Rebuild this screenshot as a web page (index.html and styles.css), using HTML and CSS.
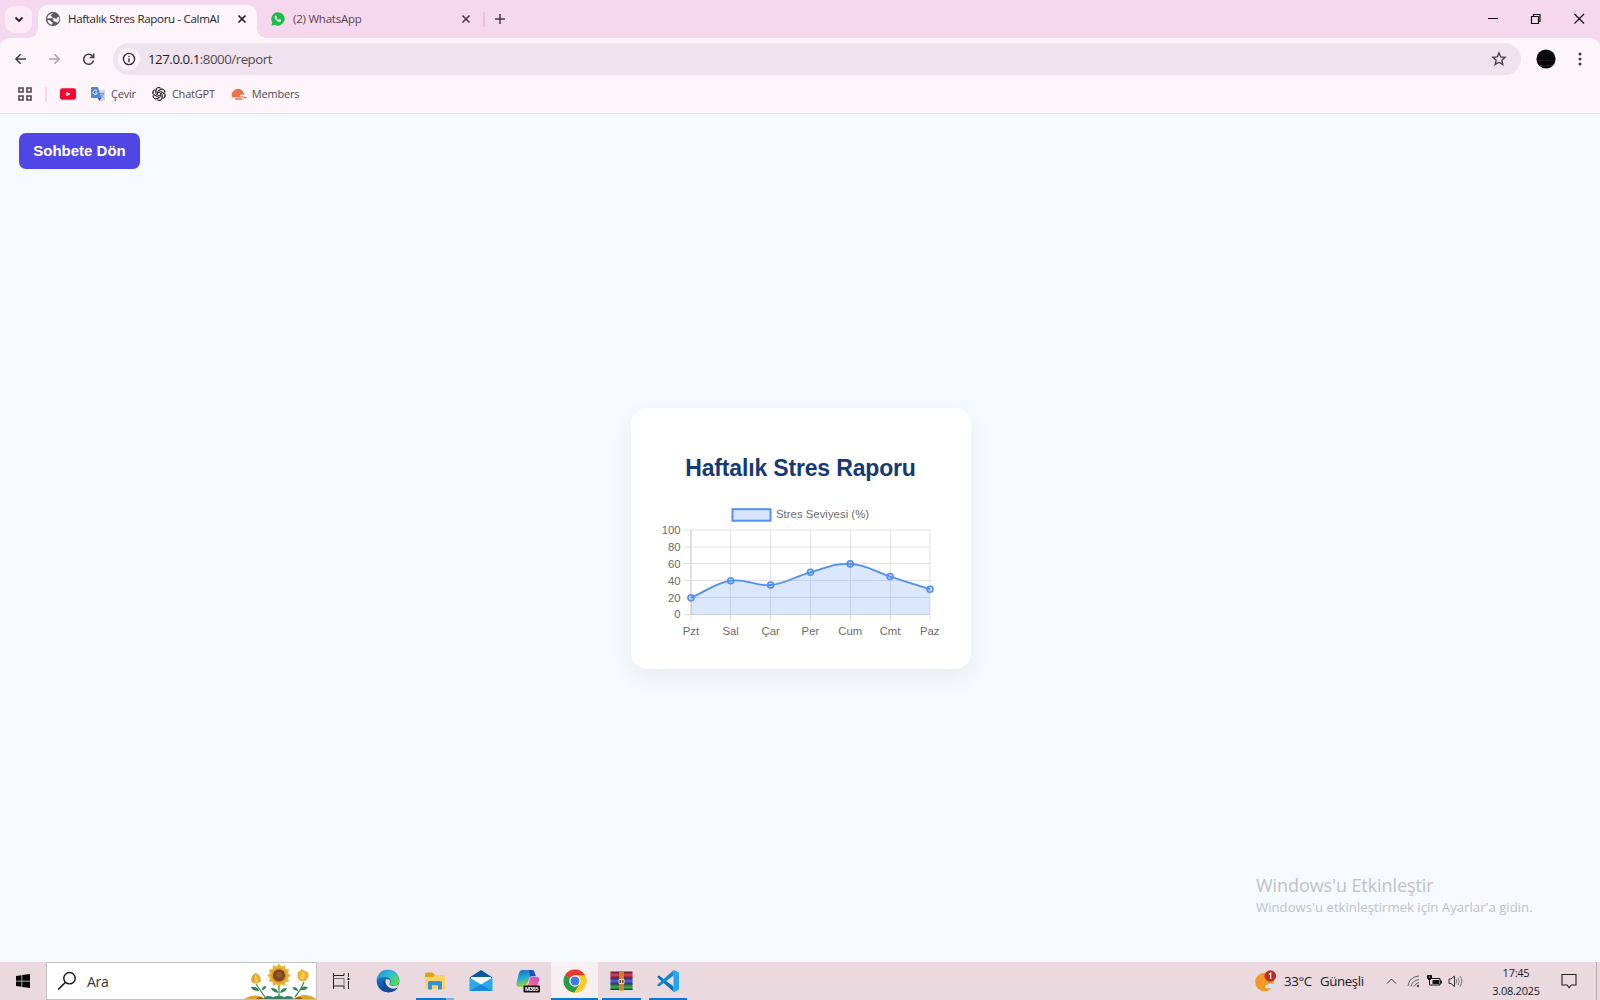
FILE: index.html
```html
<!DOCTYPE html>
<html lang="tr">
<head>
<meta charset="utf-8">
<title>Haftalık Stres Raporu - CalmAI</title>
<link rel="stylesheet" href="styles.css">
</head>
<body>
<header class="browser">
  <div class="tabs">
    <div class="tab-search"><svg width="28" height="28" viewBox="0 0 28 28"><path d="M10.500 11.500 14 15l3.500-3.500" fill="none" stroke="#241a22" stroke-width="1.800"/></svg></div>
    <div class="tab active">
      <svg class="favicon" width="16" height="16" viewBox="0 0 16 16"><circle cx="8" cy="8" r="7.200" fill="#5d5b60"/><path d="M8.300 2.200C7.600 3.200 6 3.300 5.700 4.300c-.3 1 1.400 1 1.700 1.900.2.700 1 .9 1.900.8.900-.1 1.100.9 2 .8 1-.1.800-1.300 1.500-1.800.5-.3 1-.1 1.400.4.300 2-.2 3.700-1.500 5-.8.500-1.300-.2-2-.7-.9-.6-2.300.2-2.400-.9 0-.9.400-1.500-.4-2.200C6.500 6.700 4.200 7.600 2.200 7.400 2.400 4.700 5 2.200 8.300 2.200zM2.400 9c1.300-.2 2.700.3 3.400 1.200.5.700 1.700.6 1.700 1.500 0 .7-.4 1.400-.2 2.100C4.500 13.600 2.600 11.600 2.400 9z" fill="#fdf5fa"/></svg>
      <span class="t tab-title">Haftalık Stres Raporu - CalmAI</span>
      <svg class="close" width="12" height="12" viewBox="0 0 12 12"><path d="m2.500 2.500 7 7m0-7-7 7" stroke="#1d1b20" stroke-width="1.600"/></svg>
    </div>
    <div class="tab idle">
      <svg class="favicon" width="16" height="16" viewBox="0 0 16 16"><path d="M8 1.200a6.700 6.700 0 1 1-3.200 12.600L1.300 14.800l1-3.400A6.700 6.700 0 0 1 8 1.200z" fill="#16c048"/><path d="M5.600 4.600c.5-.3.800 0 1 .5.300.7.400.9 0 1.400-.3.400-.2.500.2 1 .5.700 1 1.100 1.700 1.400.3.200.5.100.8-.3.300-.4.500-.4.900-.2.900.4 1.200.5 1.100.9-.1 1-.9 1.500-1.700 1.500-2.500-.2-4.900-2.500-5-4.600 0-.7.500-1.300 1-1.600z" fill="#fff"/></svg>
      <span class="t tab-title idle-title">(2) WhatsApp</span>
      <svg class="close" width="12" height="12" viewBox="0 0 12 12"><path d="m2.500 2.500 7 7m0-7-7 7" stroke="#493744" stroke-width="1.600"/></svg>
    </div>
    <i class="tab-sep"></i>
    <svg class="new-tab" width="14" height="14" viewBox="0 0 14 14"><path d="M7 2v10M2 7h10" stroke="#493744" stroke-width="1.500"/></svg>
    <svg class="caption" width="110" height="20" viewBox="0 0 110 20"><g fill="none" stroke="#111" stroke-width="1.200"><path d="M3 9.500h10M89.500 5l9.500 9.500m0-9.500-9.500 9.500"/><path d="M46.500 7.500h7v7h-7zM48.500 7V5.500H55v7h-1.500"/></g></svg>
  </div>
  <div class="toolbar">
    <svg class="nav" width="84" height="20" viewBox="0 0 84 20"><g fill="none" stroke="#493744" stroke-width="1.500"><path d="M12 10H2M6.700 5.200 1.900 10l4.800 4.800"/><path stroke="#aaa0a8" d="M35 10h10.200M40.500 5.200l4.800 4.800-4.800 4.800"/><path d="M78.800 7.500A5 5 0 1 0 79.500 11.500M79.700 4.500v3.900h-4"/></g></svg>
    <div class="omnibox">
      <div class="site-info"><svg width="14" height="14" viewBox="0 0 14 14"><circle cx="7" cy="7" r="5.600" fill="none" stroke="#352c33" stroke-width="1.400"/><path d="M7 6.200v4M7 3.700v1.400" stroke="#352c33" stroke-width="1.400"/></svg></div>
      <span class="t url"><b>127.0.0.1</b>:8000/report</span>
      <svg class="star" width="16" height="16" viewBox="0 0 16 16"><path d="m8 1.900 1.700 4 4.400.4-3.300 2.900 1 4.300L8 11.200l-3.800 2.300 1-4.300-3.300-2.900 4.400-.4z" fill="none" stroke="#493f48" stroke-width="1.400"/></svg>
    </div>
    <svg class="avatar" width="20" height="20" viewBox="0 0 20 20"><circle cx="10" cy="10" r="9.600" fill="#08090c"/><path d="M2 11.500h16" stroke="#241a1c" stroke-width="1"/><path d="M4 16.500h12" stroke="#38201a" stroke-width="1"/><path d="M6 12l3-1 2 4-3 2z" fill="#000"/></svg>
    <svg class="menu" width="4" height="16" viewBox="0 0 4 16"><g fill="#493744"><circle cx="2" cy="3" r="1.500"/><circle cx="2" cy="8" r="1.500"/><circle cx="2" cy="13" r="1.500"/></g></svg>
  </div>
  <nav class="bookmarks">
    <svg class="apps" width="16" height="16" viewBox="0 0 16 16"><path d="M2 2h4v4H2zM10 2h4v4h-4zM2 10h4v4H2zM10 10h4v4h-4z" fill="none" stroke="#51454d" stroke-width="1.600"/></svg>
    <i class="bm-sep"></i>
    <svg class="yt" width="16" height="12" viewBox="0 0 16 12"><rect width="16" height="11.500" y=".3" rx="2.500" fill="#f5052f"/><path d="m6.500 3.700 4 2.300-4 2.300z" fill="#fff"/></svg>
    <svg class="tr" width="16" height="16" viewBox="0 0 16 16"><path d="M6 4h8a1 1 0 0 1 1 1v9a1 1 0 0 1-1 1H9z" fill="#d5d9df"/><path d="M2 1h6l3.300 11H2a1 1 0 0 1-1-1V2a1 1 0 0 1 1-1z" fill="#4b86ea"/><path d="m8 12h3.300L9.500 15z" fill="#2956b5"/><path d="M7 5.200A2.100 2.100 0 1 0 7.200 7H5.500" fill="none" stroke="#fff" stroke-width="1"/><path d="M10.200 7.500h4.100M12 6.500v1M13.500 7.500c-.3 2-1.300 3.500-2.500 4.500M11 8.500c.7 1.800 1.800 3 2.800 4" stroke="#7a8792" stroke-width=".8" fill="none"/></svg>
    <span class="t bm cevir">Çevir</span>
    <svg class="gpt" width="14" height="14" viewBox="-7 -7 14 14"><g fill="none" stroke="#1c1a1c" stroke-width=".8"><path id="petal" d="M-3.200-.8V-3.600A2.900 2.900 0 0 1 1.600-5.700M-1.500.9V-2.600L1.900-4.600A2.800 2.800 0 0 1 5.900-1.600"/><use href="#petal" transform="rotate(60)"/><use href="#petal" transform="rotate(120)"/><use href="#petal" transform="rotate(180)"/><use href="#petal" transform="rotate(240)"/><use href="#petal" transform="rotate(300)"/></g></svg>
    <span class="t bm chatgpt">ChatGPT</span>
    <svg class="mem" width="16" height="14" viewBox="0 0 16 14"><path d="M1 10A6.300 6.300 0 1 1 13.300 7.800H9v1.500h3v1H.8zM3.500 11.200H11v1.600H4.500zM12 10h3.500v1.200H12z" fill="#ed6f4b"/></svg>
    <span class="t bm members">Members</span>
  </nav>
</header>
<main class="page">
  <a class="back"><span class="t">Sohbete Dön</span></a>
  <section class="card">
    <h1><span class="t">Haftalık Stres Raporu</span></h1>
    <svg class="chart" width="300" height="140" viewBox="651 501 300 140">
      <rect x="732.500" y="509.200" width="38" height="11.500" fill="#dae6fd" stroke="#4f8ff7" stroke-width="2"/>
      <text x="776" y="518" textLength="93">Stres Seviyesi (%)</text>
      <path class="grid" d="M684 530h246M684 547h246M684 563.500h246M684 580.500h246M684 597.500h246M684 614.500h246M691 530v91M730.500 530v91M770.500 530v91M810.500 530v91M850.500 530v91M890.500 530v91M930 530v91"/>
      <path class="axis" d="M691 530v85"/>
      <path d="M691 597.700C706.900 590.900 714.800 583.200 730.700 580.700C746.600 578.200 754.700 586.700 770.600 585C786.500 583.300 794.500 576.600 810.400 572.300C826.300 568 834.300 563 850.200 563.900C866.100 564.600 874.100 571.300 890 576.500C905.900 581.500 914 584.100 930 589.200V614.700H691Z" fill="#3b82f6" fill-opacity=".19"/>
      <path d="M691 597.700C706.900 590.900 714.800 583.200 730.700 580.700C746.600 578.200 754.700 586.700 770.600 585C786.500 583.300 794.500 576.600 810.400 572.300C826.300 568 834.300 563 850.200 563.900C866.100 564.600 874.100 571.300 890 576.500C905.900 581.500 914 584.100 930 589.200" fill="none" stroke="#4f8ff0" stroke-width="1.800"/>
      <g class="dots"><circle cx="691" cy="597.700" r="3"/><circle cx="730.700" cy="580.700" r="3"/><circle cx="770.600" cy="585" r="3"/><circle cx="810.400" cy="572.300" r="3"/><circle cx="850.200" cy="563.900" r="3"/><circle cx="890" cy="576.500" r="3"/><circle cx="930" cy="589.200" r="3"/></g>
      <g text-anchor="end"><text x="680.500" y="533.500">100</text><text x="680.500" y="550.500">80</text><text x="680.500" y="567.500">60</text><text x="680.500" y="584.500">40</text><text x="680.500" y="601.500">20</text><text x="680.500" y="618">0</text></g>
      <g text-anchor="middle"><text x="691" y="635">Pzt</text><text x="730.700" y="635">Sal</text><text x="770.600" y="635">Çar</text><text x="810.400" y="635">Per</text><text x="850.200" y="635">Cum</text><text x="890" y="635">Cmt</text><text x="929.700" y="635">Paz</text></g>
    </svg>
  </section>
  <aside class="watermark"><p><span class="t wm1">Windows'u Etkinleştir</span></p><p class="small"><span class="t wm2">Windows'u etkinleştirmek için Ayarlar'a gidin.</span></p></aside>
</main>
<footer class="taskbar">
  <div class="start"><svg width="14" height="14" viewBox="0 0 14 14"><path d="M0 2 5.500 1.200V6.700H0zM6.200 1.100 14 0v6.700H6.200zM0 7.400h5.500v5.400L0 12zM6.200 7.400H14V14l-7.800-1.100z" fill="#050505"/></svg></div>
  <div class="search">
    <svg width="20" height="20" viewBox="0 0 20 20"><circle cx="12.500" cy="7.200" r="5.700" fill="none" stroke="#111" stroke-width="1.400"/><path d="m8.500 11.200-7.300 7.300" stroke="#111" stroke-width="1.500"/></svg>
    <span class="t ara">Ara</span>
    <svg class="flowers" width="72" height="36" viewBox="0 0 72 36"><g stroke="#3e8a45" stroke-width="1.200" fill="none"><path d="M12 21q4 6 9 13M35 22v12M60 19q-3 8-9 15"/></g><g fill="#2f8452"><path d="M15 28q-7 0-8-4 7-1 8 4zM18 27q4 0 4-4-4 0-4 4zM34 30q-6-1-7-5 7 0 7 5zM36 30q6-1 7-5-6 0-7 5zM56 27q6 1 8-3-6-2-8 3zM54 28q-6-1-5-4 5 0 5 4z"/><path d="M19 36q3-5 10-2 7-3 11 0 7-3 10 2z" fill="#3d8063"/></g><path d="M8 13q-2 5 1 7 5 2 8-2 0-4-3-7l-3-1z" fill="#e0aa32"/><path d="m11 11 3 5 1 3-4 1z" fill="#f3cb55"/><path d="M54 9q-2 7 3 9 5 1 7-3 1-3 0-6l-3-1-3-2-2 2z" fill="#edaf2d"/><path d="m58 8 3 3-1 6-4-2z" fill="#f8d05b"/><g fill="#eeb030"><path id="ray" d="M35 .8Q39.500 5 37.500 9h-5Q30.500 5 35 .8z"/><use href="#ray" transform="rotate(30 35 12.500)"/><use href="#ray" transform="rotate(60 35 12.500)"/><use href="#ray" transform="rotate(90 35 12.500)"/><use href="#ray" transform="rotate(120 35 12.500)"/><use href="#ray" transform="rotate(150 35 12.500)"/><use href="#ray" transform="rotate(180 35 12.500)"/><use href="#ray" transform="rotate(210 35 12.500)"/><use href="#ray" transform="rotate(240 35 12.500)"/><use href="#ray" transform="rotate(270 35 12.500)"/><use href="#ray" transform="rotate(300 35 12.500)"/><use href="#ray" transform="rotate(330 35 12.500)"/></g><circle cx="35" cy="12.500" r="7.500" fill="#dc9524"/><circle cx="35" cy="12.500" r="6" fill="#7a4520"/><circle cx="35" cy="12" r="3" fill="#97592a"/><path d="M0 36q9-6 18-2l2 2zM50 36q11-8 22 0z" fill="#dca329"/><path d="M12 36q4-4 8 0zM50 36q5-4 9 0z" fill="#925817"/></svg>
  </div>
  <div class="apps-row">
    <div class="app task"><svg width="17" height="16" viewBox="0 0 17 16"><g fill="none" stroke="#222" stroke-width="1"><path d="M.5 0v2.500h10.500V0M.5 16v-3h10.500v3M.5 2.500v11M15.500 0v4M15.500 8v8"/><path stroke="#777" d="M.5 5.500h10.500v7.500"/></g><path d="M14.500 5h2v2h-2z" fill="#222"/></svg></div>
    <div class="app"><svg width="24" height="24" viewBox="0 0 24 24"><defs><linearGradient id="eg" x1="0" y1="0" x2="1" y2=".5"><stop stop-color="#1b8fd4"/><stop offset=".55" stop-color="#2dbdd2"/><stop offset="1" stop-color="#58d65b"/></linearGradient><linearGradient id="eb" x2="0" y2="1"><stop stop-color="#1787d8"/><stop offset="1" stop-color="#114a99"/></linearGradient></defs><circle cx="12" cy="12" r="11.300" fill="url(#eb)"/><path d="M.8 11A11.300 11.300 0 0 1 23.300 12c0 3-2.500 4.700-5.300 4.700-3.500 0-4.800-1.200-4-2.200 2-3-.5-6.500-4.300-6.500C5.500 8 2.300 9 .8 11z" fill="url(#eg)"/><path d="M9.700 10.500C7 15 11 20.500 20 19c1.200-.5 2-.9 1.500.3-2 2.600-5.500 4.300-9.500 4.100C4.500 21 5.500 12 9.700 10.500z" fill="#104b96"/><path d="M9.700 10.500c4-1 5 1.800 3.900 4-.8 1.700 2 2.800 5 2.400 1.500-.2 3-.7 4-1.800-.2 2-1 3-2 4-6 2.200-12.300-2.500-10.900-8.600z" fill="#ebd9e0"/></svg></div>
    <div class="app open explorer"><svg width="22" height="20" viewBox="0 0 22 20"><path d="M1 3a1.500 1.500 0 0 1 1.500-1.500h6L11 4h9a1 1 0 0 1 1 1v13H1z" fill="#e0a012"/><path d="M1 6h7.500L11 4h10v14H1z" fill="#fbd368"/><path d="M4 18.500v-7A1.500 1.500 0 0 1 5.500 10h11a1.500 1.500 0 0 1 1.500 1.500v7h-4v-4.300H8v4.300z" fill="#398fcf"/></svg></div>
    <div class="app"><svg width="24" height="22" viewBox="0 0 24 22"><path d="M.5 7.500 12 0l11.500 7.500L12 14z" fill="#075a9e"/><path d="M2 7h20v8H2z" fill="#f5fafc"/><path d="M.5 7.500V21h23V7.500L12 14.500z" fill="#2ca9e8"/><path d="m.5 21 11.500-6.500L23.500 21z" fill="#1689d8"/></svg></div>
    <div class="app"><svg width="24" height="24" viewBox="0 0 24 24"><defs><linearGradient id="m1" x2=".3" y2="1"><stop stop-color="#245fce"/><stop offset=".5" stop-color="#1cabd1"/><stop offset="1" stop-color="#a5d63a"/></linearGradient><linearGradient id="m2" x1="1" x2="0" y2="1"><stop stop-color="#a657dd"/><stop offset=".5" stop-color="#ee5aa4"/><stop offset="1" stop-color="#fb8c62"/></linearGradient></defs><path d="M6 1h10q2 0 2.700 3L20 8h-4q-2 0-3 3l-2 5q-1 2-4 2H3q-3 0-2.500-4L3 4q.8-3 3-3z" fill="url(#m1)"/><path d="M13 1h3q2 0 2.700 3L20 8h-6z" fill="#214fbb"/><path d="M15.500 7.500H20q4 0 3.500 4L21 18H9q2 0 3-3l1.500-5.500q.5-2 2-2z" fill="url(#m2)" stroke="#ebd9e0" stroke-width=".7"/><rect x="7.500" y="16.500" width="16.500" height="7" rx="1" fill="#111"/><text x="9" y="22" textLength="13.500" class="m365">M365</text></svg></div>
    <div class="app open current"><svg width="24" height="24" viewBox="0 0 24 24"><circle cx="12" cy="12" r="11.500" fill="#fcc91f"/><path d="M12 12 2 6.300A11.500 11.500 0 0 1 22 6.300z" fill="#e33b2e"/><path d="M2 6.300A11.500 11.500 0 0 0 11.500 23.500L17 14.800 12 12z" fill="#2a9b48"/><path d="M12 6.300h10a11.500 11.500 0 0 1-10.500 17.200L17 14.800z" fill="#fcc91f"/><circle cx="12" cy="12" r="5.700" fill="#fff"/><circle cx="12" cy="12" r="4.500" fill="#3b7de9"/></svg></div>
    <div class="app open"><svg width="23" height="20" viewBox="0 0 23 20"><path d="M.5 1h22v6H.5z" fill="#b92440"/><path d="M.5 7h22v6H.5z" fill="#3947b4"/><path d="M.5 13h22v6H.5z" fill="#238a42"/><path d="M.5 1h22M.5 7h22M.5 13h22M.5 18.500h22" stroke="#4a2537" stroke-width="1"/><path d="M1 4h21M1 10h21M1 16h21" stroke="#fff" stroke-opacity=".25"/><path d="M9 .5h5v19H9z" fill="#cc832d"/><path d="M9 8.500h5v4H9z" fill="#6e3e23" stroke="#f2dfb5" stroke-width="1"/><path d="M11.500 8v5" stroke="#f3eab6"/></svg></div>
    <div class="app open"><svg width="24" height="24" viewBox="0 0 24 24"><path d="m1 8 2-1.600 14.500 11v5.300z" fill="#0871b7"/><path d="m1 16 2 1.600 14.500-11V1.300z" fill="#1087cf"/><path d="m17.500.8 5.500 2.700v17l-5.500 2.700z" fill="#26a5ed"/></svg></div>
  </div>
  <div class="tray">
    <svg class="weather" width="22" height="22" viewBox="0 0 22 22"><circle cx="9.500" cy="12" r="9.300" fill="#f29a24"/><path d="M10 17.500a3 3 0 0 1 3-3q3-3 5.500 0a2 2 0 0 1 1 3.700h-8z" fill="#d1e3fa"/><circle cx="15.300" cy="6" r="5.800" fill="#c22c23"/><path d="M14 4.500 15.700 3.200V9" fill="none" stroke="#fff" stroke-width="1.100"/></svg>
    <span class="t temp">33°C</span><span class="t cond">Güneşli</span>
    <svg class="status" width="78" height="16" viewBox="0 0 78 16"><g fill="none" stroke="#333" stroke-width="1"><path d="M1 10.500 5.500 6 10 10.500"/><path stroke="#666" d="M22 13q1-9 11-10M25 13.500q1-6 8-7M28 13.500q1-3 5-4"/><path d="M63 6h2l3.500-3v10.500L65 10.500h-2z"/><path stroke="#777" d="M70 6q1.500 2 0 4.500M72 4.500q2.700 4 0 7.500M74 3q4 5 0 10.500"/></g><circle cx="32" cy="13" r="1.200" fill="#444"/><path d="M43.500 5.500H54v6.500H43.500z" fill="none" stroke="#111"/><path d="M46.500 7H53v4h-6.500zM54 7.500h2v3h-2z" fill="#111"/><path d="M41.500 2.500h4v3l-2 1.500-2-1.500zM43.500 6v4" fill="#111" stroke="#111"/><path d="M43 3.500h1v1h-1z" fill="#ebd9e0"/></svg>
    <div class="clock"><span class="t time">17:45</span><span class="t date">3.08.2025</span></div>
    <svg class="notice" width="16" height="16" viewBox="0 0 16 16"><path d="M1 1.500h14v10.500h-4.500L8 14.700 6 12H1z" fill="none" stroke="#222" stroke-width="1.100"/></svg>
    <i class="show-desktop"></i>
  </div>
</footer>
</body>
</html>
```

FILE: styles.css
```css
* { box-sizing: border-box; }
html, body { height: 100%; margin: 0; }
body { display: flex; flex-direction: column; overflow: hidden; font-family: "Open Sans", "Noto Sans", sans-serif; background: #f5faff; }
svg { display: block; flex: none; }
p, h1 { margin: 0; }
.t { white-space: nowrap; }

.browser { flex: none; height: 114px; background: #f6d8ee; }
.tabs { display: flex; align-items: center; height: 38px; padding-left: 5px; }
.tab-search { width: 27px; height: 27px; border-radius: 9px; background: #fceaf6; overflow: hidden; }
.tab { display: flex; align-items: center; }
.tab.active { position: relative; width: 219px; height: 33px; margin: 5px 0 0 6px; padding: 0 9px 5px 7px; border-radius: 10px 10px 0 0; background: #fef5fa; }
.tab.active::before, .tab.active::after { content: ""; position: absolute; bottom: 0; width: 9px; height: 9px; }
.tab.active::before { left: -9px; background: radial-gradient(circle at 0 0, transparent 8.5px, #fef5fa 9px); }
.tab.active::after { right: -9px; background: radial-gradient(circle at 100% 0, transparent 8.5px, #fef5fa 9px); }
.tab-title { margin-left: 7px; font-size: 11.5px; line-height: 16px; letter-spacing: -.31px; color: #29232a; }
.idle-title { color: #57434f; letter-spacing: -.22px; }
.close { margin-left: auto; }
.tab.idle { width: 202px; margin-left: 13px; }
.tab-sep { width: 2px; height: 15px; margin-left: 11px; background: #efc1e1; }
.new-tab { margin-left: 8px; }
.caption { margin-left: auto; margin-right: 5px; }
.toolbar { display: flex; align-items: center; height: 42px; padding-left: 14px; border-radius: 9px 9px 0 0; background: #fef5fa; }
.omnibox { display: flex; align-items: center; width: 1408px; height: 32px; margin-left: 15px; padding: 0 14px 0 5px; border-radius: 16px; background: #efe4ed; }
.site-info { display: grid; place-items: center; width: 22px; height: 22px; border-radius: 50%; background: #fef5fa; }
.url { margin-left: 8px; font-size: 13.3px; line-height: 20px; letter-spacing: -.48px; color: #554b54; }
.url b { font-weight: 400; color: #1f1b1f; }
.star { margin-left: auto; }
.avatar { margin-left: 15px; }
.menu { margin-left: 22px; }
.bookmarks { display: flex; align-items: center; height: 34px; padding: 0 0 5px 17px; border-bottom: 1px solid #ecdde4; background: #fef5fa; }
.bm-sep { width: 2px; height: 15px; margin-left: 12px; background: #f7d8ed; }
.yt { margin-left: 13px; }
.tr { margin-left: 14px; }
.bm { font-size: 11px; line-height: 16px; letter-spacing: -.2px; color: #54474f; }
.cevir { margin-left: 5px; }
.gpt { margin-left: 16px; }
.chatgpt { margin-left: 6px; }
.mem { margin-left: 16px; }
.members { margin-left: 5px; }

.page { position: relative; flex: 1; display: grid; place-items: center; background: #f5faff; font-family: "Liberation Sans", Arial, sans-serif; }
.back { position: absolute; left: 19px; top: 19px; display: grid; place-items: center; width: 121px; height: 36px; padding-bottom: 2px; border-radius: 7px; background: #5046e5; color: #fff; font-size: 15px; font-weight: 700; }
.card { display: flex; flex-direction: column; align-items: center; width: 340px; height: 261px; margin-left: 1px; padding-top: 47px; border-radius: 16px; background: #fff; box-shadow: 0 8px 24px rgba(0, 0, 0, .06); }
h1 { height: 46px; font-size: 23px; line-height: 27px; font-weight: 700; letter-spacing: -.16px; color: #153a73; }
.chart text { font: 11.3px "Liberation Sans", Arial, sans-serif; fill: #6b6b6b; }
.grid { fill: none; stroke: #e3e3e3; stroke-width: 1; }
.axis { fill: none; stroke: #cfcfcf; stroke-width: 1; }
.dots { fill: #3b82f6; fill-opacity: .2; stroke: #4f8ff5; stroke-width: 1.6; }
.watermark { position: absolute; left: 1256px; top: 758px; color: #bfc2c6; font-family: "Open Sans", "Noto Sans", sans-serif; }
.watermark p { height: 26px; font-size: 18px; line-height: 27px; letter-spacing: -.08px; }
.watermark .small { height: 18px; font-size: 13.2px; line-height: 18px; letter-spacing: 0; }

.taskbar { flex: none; display: flex; height: 38px; background: #ebd9e0; }
.start { display: grid; place-items: center; width: 46px; }
.search { display: flex; align-items: center; width: 271px; padding-left: 10px; border: 1px solid #c3bfc3; background: #fff; }
.ara { margin-left: 10px; font-size: 14px; letter-spacing: -.3px; color: #333; }
.flowers { margin-left: auto; }
.apps-row { display: flex; }
.app { position: relative; display: grid; place-items: center; width: 46.6px; }
.task { width: 48px; }
.open::after { content: ""; position: absolute; left: 4px; right: 4px; bottom: 0; height: 2px; background: #0c78d4; }
.explorer::after { background: linear-gradient(90deg, #0c78d4 80%, #7cb2de 80%); }
.current { background: #f6f0f3; }
.current::after { left: 0; right: 0; }
.tray { display: flex; align-items: center; margin-left: auto; color: #1a1a1a; }
.temp, .cond { font-size: 13.3px; }
.temp { width: 28px; margin-left: 7px; letter-spacing: -.4px; }
.cond { width: 44px; margin-left: 8px; letter-spacing: -.4px; }
.status { margin-left: 22px; }
.clock { display: flex; flex-direction: column; align-items: center; width: 60px; margin: 2px 0 0 22px; font-size: 11px; line-height: 18px; letter-spacing: -.25px; }
.notice { margin-left: 15px; }
.show-desktop { width: 1px; height: 38px; margin: 0 3px 0 19px; background: #b9a6af; }
.m365 { font: bold 6px "Liberation Sans", sans-serif; fill: #fff; }
```
